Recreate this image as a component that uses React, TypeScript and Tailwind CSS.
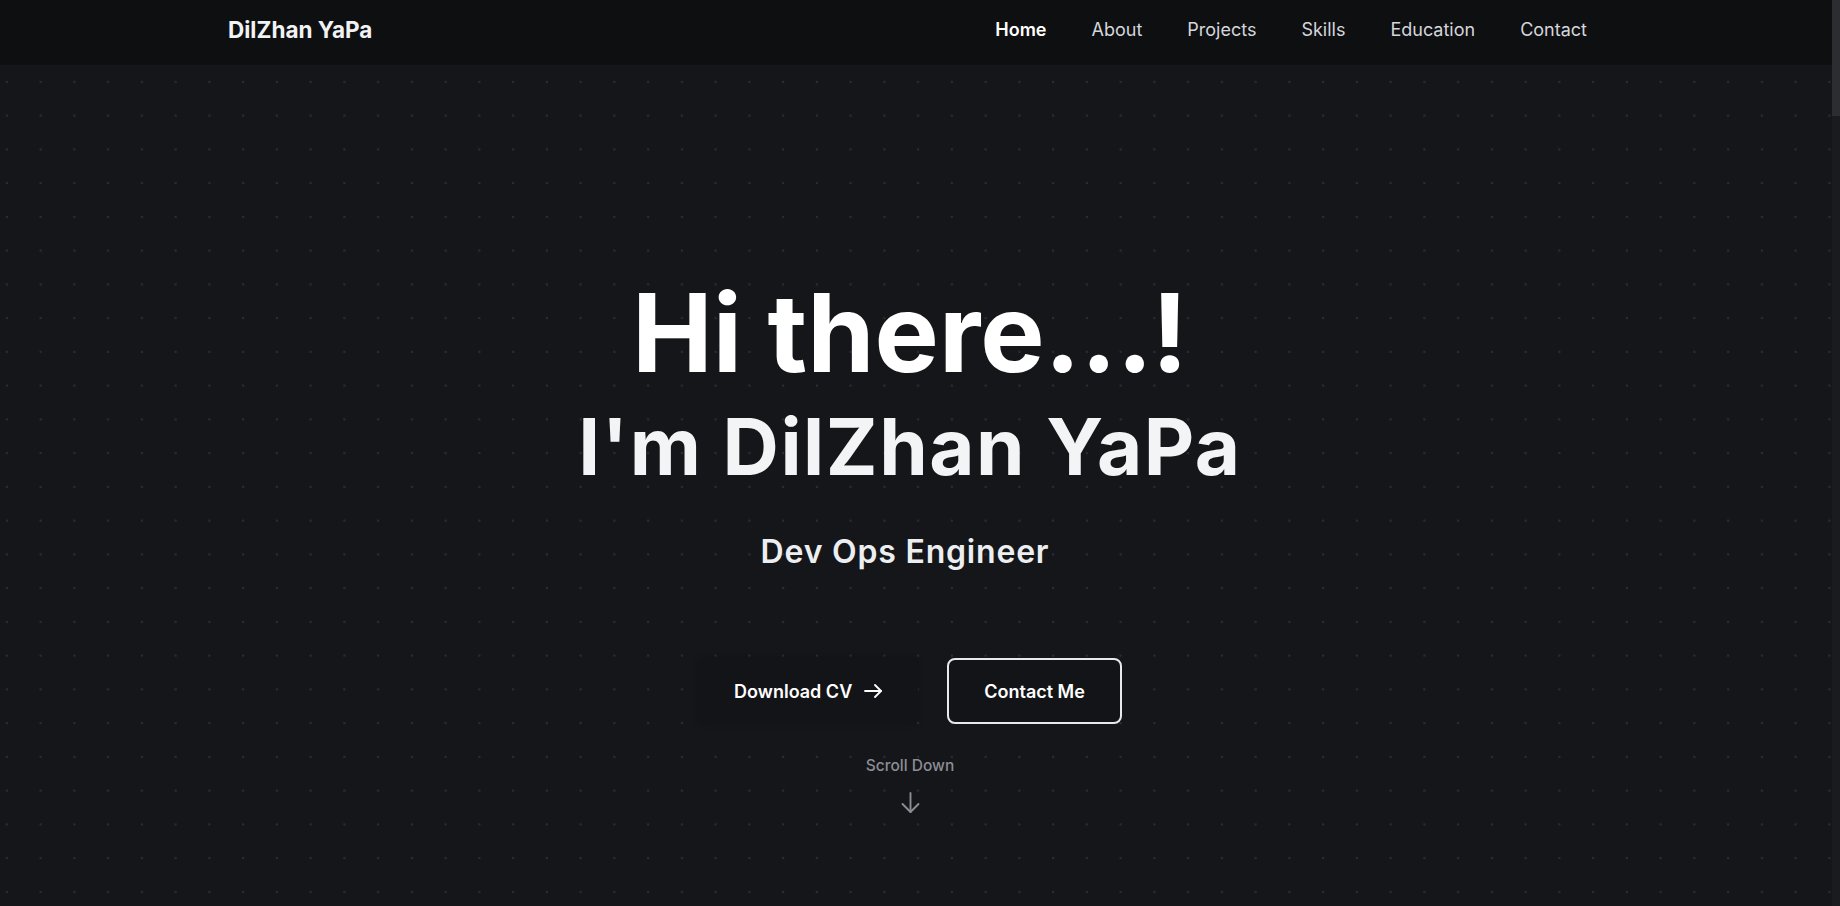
import React from "react";

const navItems = ["Home", "About", "Projects", "Skills", "Education", "Contact"];

const ArrowRight = () => (
  <svg width="18" height="14" viewBox="0 0 18 14" fill="none" stroke="currentColor" strokeWidth="1.8" strokeLinecap="round" strokeLinejoin="round">
    <path d="M1 7h16" />
    <path d="M11 1l6 6-6 6" />
  </svg>
);

const ArrowDown = () => (
  <svg width="19" height="22" viewBox="0 0 19 22" fill="none" stroke="currentColor" strokeWidth="1.9" strokeLinecap="round" strokeLinejoin="round">
    <path d="M9.5 1v19" />
    <path d="M1.5 12l8 8 8-8" />
  </svg>
);

const App: React.FC = () => {
  return (
    <div className="flex h-screen overflow-hidden bg-[#151619] font-[Inter,sans-serif] text-white">
      <main className="min-w-0 flex-1">
        {/* Top navigation */}
        <header className="h-[65px] bg-[#0e0f11] pr-3">
          <div className="mx-auto flex h-full max-w-[1364px] items-center justify-between pb-[6px]">
            <a href="#home" className="text-[22.5px] font-bold text-[#f1f2f4]">
              DilZhan YaPa
            </a>
            <nav>
              <ul className="flex items-center gap-[45px] pr-[5px]">
                {navItems.map((item) => (
                  <li key={item}>
                    <a
                      href={`#${item.toLowerCase()}`}
                      className={
                        item === "Home"
                          ? "text-[18px] font-semibold text-white"
                          : "text-[18px] font-normal text-[#d4d6db]"
                      }
                    >
                      {item}
                    </a>
                  </li>
                ))}
              </ul>
            </nav>
          </div>
        </header>

        {/* Hero with dotted background */}
        <section
          id="home"
          className="flex h-[841px] flex-col items-center bg-[radial-gradient(circle,#2c2d31_1.2px,transparent_1.6px)] bg-[length:33.75px_33.75px] bg-[position:-10px_0] pr-3 pt-[214px]"
        >
          <h1 className="text-[108px] font-bold leading-none text-white">Hi there...!</h1>
          <h2 className="mt-[21px] text-[78px] font-bold leading-none tracking-[0.02em] text-[#f3f4f6]">
            I'm DilZhan YaPa
          </h2>
          <p className="mr-[10px] mt-[45px] text-[32px] font-semibold leading-[42px] tracking-[0.025em] text-[#eceef1]">
            Dev Ops Engineer
          </p>

          <div className="mt-[85px] flex items-center gap-[29px]">
            <button className="flex h-[66px] items-center gap-3 rounded-lg bg-[#131417] px-[36px] text-[18px] font-semibold text-white shadow-[0_0_6px_rgba(0,0,0,0.2)]">
              Download CV
              <ArrowRight />
            </button>
            <button className="flex h-[66px] items-center rounded-lg border-2 border-[#e8e9ec] bg-[#131417] px-[35px] text-[18px] font-semibold text-white">
              Contact Me
            </button>
          </div>

          <div className="mt-[31px] flex flex-col items-center text-[#8b8d95]">
            <span className="text-[15.5px] font-medium leading-[22px]">Scroll Down</span>
            <span className="mt-[15px]">
              <ArrowDown />
            </span>
          </div>
        </section>
      </main>

      {/* Page scroll indicator */}
      <aside className="w-2 shrink-0 bg-[#1a1b1e]">
        <div className="h-[116px] bg-[#2c2d31]" />
      </aside>
    </div>
  );
};

export default App;
